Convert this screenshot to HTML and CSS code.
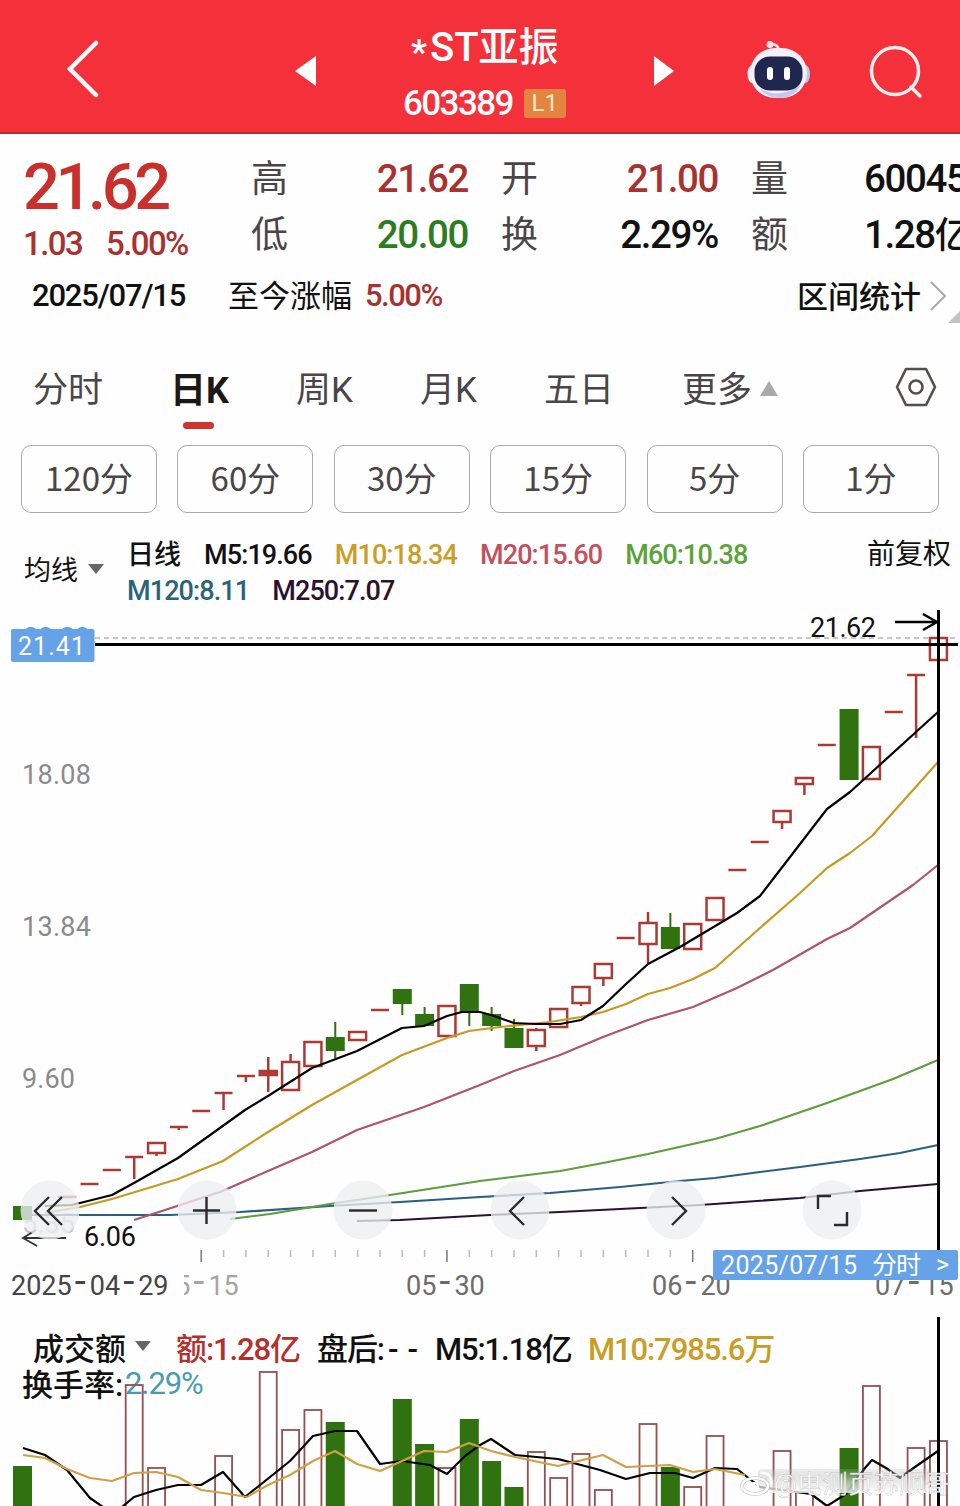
FILE: index.html
```html
<!DOCTYPE html>
<html lang="zh-CN">
<head>
<meta charset="UTF-8">
<meta name="viewport" content="width=device-width, initial-scale=1.0">
<title>*ST亚振 603389</title>
<link rel="stylesheet" href="styles.css">
</head>
<body>
<header class="topbar">
    <svg class="back" width="34" height="60" viewBox="0 0 34 60"><path d="M30 5 L4 31 L30 57"/></svg>
    <svg class="prev" width="22" height="32" viewBox="0 0 22 32"><path d="M21 1 V31 L0 16 Z"/></svg>
    <div class="stock">
        <div class="stock-name"><span class="star">*</span>ST亚振</div>
        <div class="stock-code"><span class="code">603389</span><span class="level">L1</span></div>
    </div>
    <svg class="next" width="22" height="32" viewBox="0 0 22 32"><path d="M1 1 V31 L21 16 Z"/></svg>
    <svg class="robot" width="64" height="60" viewBox="0 0 64 60">
        <path d="M32 11 C32 6 28 4 23 4" fill="none" stroke="#ffe6ea" stroke-width="2.5"/>
        <circle cx="23" cy="4.5" r="3.5" fill="#ffe0e4"/>
        <ellipse cx="5" cy="34" rx="4.5" ry="9" fill="#f4eef8"/>
        <ellipse cx="58.500" cy="34" rx="4.500" ry="9" fill="#b7c8f2"/>
        <rect x="3" y="8" width="57" height="50" rx="25" fill="#f5f1fb"/>
        <path d="M12 48 Q32 60 54 45 Q47 58 32 58 Q20 58 12 48Z" fill="#c9c7ee"/>
        <rect x="7.500" y="16.500" width="48" height="34" rx="15" fill="#1f274f"/>
        <rect x="20" y="27" width="6" height="13" rx="3" fill="#fff"/>
        <rect x="37" y="27" width="6" height="13" rx="3" fill="#fff"/>
    </svg>
    <svg class="search" width="56" height="56" viewBox="0 0 56 56"><circle cx="27" cy="26" r="23.500"/><path d="M43 42 L52 51"/></svg>
</header>

<section class="quote">
    <div class="last">
        <div class="price">21.62</div>
        <div class="change"><span>1.03</span><span>5.00%</span></div>
    </div>
    <dl class="stats">
        <dt>高</dt><dd class="up">21.62</dd>
        <dt>开</dt><dd class="up">21.00</dd>
        <dt>量</dt><dd class="cut">60045</dd>
        <dt>低</dt><dd class="down">20.00</dd>
        <dt>换</dt><dd>2.29%</dd>
        <dt>额</dt><dd class="cut">1.28<span class="unit">亿</span></dd>
    </dl>
</section>

<section class="range">
    <span class="range-date">2025/07/15</span>
    <span class="range-label">至今涨幅</span>
    <span class="range-value">5.00%</span>
    <span class="range-link">区间统计</span>
    <svg class="chevron" width="18" height="32" viewBox="0 0 18 32"><path d="M2 2 L16 16 L2 30"/></svg>
    <i class="corner"></i>
</section>

<nav class="tabs">
    <a>分时</a>
    <a class="active">日K</a>
    <a>周K</a>
    <a>月K</a>
    <a>五日</a>
    <a>更多<svg width="18" height="15" viewBox="0 0 18 15"><path d="M9 0 L18 15 H0 Z"/></svg></a>
    <svg class="settings" width="42" height="40" viewBox="0 0 42 40"><path d="M11 2 H31 L40 20 L31 38 H11 L2 20 Z"/><circle cx="21" cy="20" r="6.500"/></svg>
</nav>

<div class="minutes">
    <button>120分</button>
    <button>60分</button>
    <button>30分</button>
    <button>15分</button>
    <button>5分</button>
    <button>1分</button>
</div>

<section class="legend">
    <div class="picker">均线<i class="caret"></i></div>
    <div class="ma">
        <div class="ma-row"><b>日线</b><span>M5:19.66</span><span class="m10">M10:18.34</span><span class="m20">M20:15.60</span><span class="m60">M60:10.38</span></div>
        <div class="ma-row"><span class="m120">M120:8.11</span><span class="m250">M250:7.07</span></div>
    </div>
    <div class="adjust">前复权</div>
</section>

<svg class="chart" width="960" height="695" viewBox="0 605 960 695">
    <text class="axis-on" x="23" y="647" textLength="67">22.32</text>
    <path class="dash" d="M95 638 H955"/>
    <text class="axis" x="22" y="784" textLength="69">18.08</text>
    <text class="axis" x="22" y="936" textLength="69">13.84</text>
    <text class="axis" x="22" y="1088" textLength="53">9.60</text>
    <text class="axis faint" x="22" y="1233" textLength="53">5.35</text>
    <g id="ticks"></g>
    <text class="axis soft" x="160" y="1295">05<tspan class="hy" dx="3">-</tspan><tspan dx="4">15</tspan></text>
    <rect x="10" y="1270" width="174" height="30" fill="#fefefe"/>
    <text class="axis dark" x="11" y="1295">2025<tspan class="hy" dx="3">-</tspan><tspan dx="4">04</tspan><tspan class="hy" dx="3">-</tspan><tspan dx="4">29</tspan></text>
    <text class="axis mid" x="406" y="1295">05<tspan class="hy" dx="3">-</tspan><tspan dx="4">30</tspan></text>
    <text class="axis mid" x="652" y="1295">06<tspan class="hy" dx="3">-</tspan><tspan dx="4">20</tspan></text>
    <text class="axis mid" x="875" y="1295">07<tspan class="hy" dx="3">-</tspan><tspan dx="4">15</tspan></text>

    <g id="candles"></g>
    <g class="lines">
        <polyline stroke="#2a5f80" points="22,1215 170,1215 240,1212 330,1206 400,1202 480,1197 550,1193 620,1187 680,1181 715,1178 760,1172 800,1167 860,1159 900,1153 938,1145"/>
        <polyline stroke="#2b1130" points="357,1221 400,1220 490,1215 560,1212 640,1208 700,1205 800,1198 860,1191 938,1184"/>
        <polyline stroke="#5f9c3c" points="230,1219 270,1214 330,1204 390,1195 480,1181 560,1171 603,1163 648,1154 715,1139 760,1126 827,1103 893,1079 938,1060"/>
        <polyline stroke="#b05468" points="134,1220 165,1210 220,1192 268,1171 312,1152 357,1130 424,1107 480,1085 514,1071 560,1055 603,1037 648,1020 693,1007 737,988 773,970 827,939 850,928 913,885 938,865"/>
        <polyline stroke="#c69a22" points="45,1213 80,1207 112,1199 178,1179 223,1161 268,1132 312,1105 357,1080 402,1055 447,1038 469,1031 500,1027 550,1022 581,1017 603,1012 626,1004 648,994 670,988 693,979 715,968 760,928 800,893 827,868 850,853 872,836 938,762"/>
        <polyline stroke="#000" points="45,1206 72,1205 112,1195 134,1183 178,1158 245,1110 268,1096 312,1068 357,1051 402,1028 424,1026 447,1016 462,1012 480,1012 491,1015 514,1023 536,1024 560,1024 581,1020 603,1006 626,984 648,964 680,947 737,913 760,896 827,809 850,792 938,712"/>
    </g>

    <text class="mark" x="810" y="637" textLength="66">21.62</text>
    <path class="arrow" d="M895 622 H936 M923 614 L937 622 L923 630"/>
    <text class="mark" x="84" y="1246" textLength="52">6.06</text>
    <path class="arrow thin" d="M66 1238 H24 M36 1230 L23 1238 L37 1246"/>

    <path class="cross" d="M95 644.500 H958 M938.500 610 V1250"/>
    <rect class="tag" x="11" y="629" width="83.500" height="33" rx="2"/>
    <text class="tag-text" x="18" y="655" textLength="67">21.41</text>
    <rect class="tag" x="713" y="1250" width="245" height="30" rx="2"/>
    <text class="tag-text" x="721" y="1274" textLength="136">2025/07/15</text>
    <text class="tag-text" x="872" y="1274" textLength="49">分时</text>
    <text class="tag-text" x="936" y="1273">&gt;</text>

    <g class="knobs">
        <circle cx="50" cy="1210" r="29.500"/>
        <circle cx="207" cy="1210" r="29.500"/>
        <circle cx="363" cy="1210" r="29.500"/>
        <circle cx="520" cy="1210" r="29.500"/>
        <circle cx="676" cy="1210" r="29.500"/>
        <circle cx="832" cy="1210" r="29.500"/>
        <path d="M49 1197 L35 1211 L49 1225 M62 1197 L48 1211 L62 1225"/>
        <path d="M193 1210.500 H220 M206.500 1197 V1224"/>
        <path d="M349 1210.500 H377"/>
        <path d="M524 1197 L510 1211 L524 1225"/>
        <path d="M672 1197 L686 1211 L672 1225"/>
        <path d="M818 1209 V1196 H831 M834 1225 H847 V1212"/>
    </g>
</svg>

<section class="volume">
    <div class="volume-head">
        <div class="vol-row"><b class="vol-name">成交额</b><i class="caret"></i><span class="vol-amount">额:1.28亿</span><span class="vol-after">盘后:<span class="none">--</span></span><span class="vol-m5">M5:1.18亿</span><span class="m10">M10:7985.6万</span></div>
        <div class="vol-row second"><span>换手率:</span><span class="rate">2.29%</span></div>
    </div>
    <svg class="volume-chart" width="960" height="206" viewBox="0 1300 960 206">
        <g id="bars"></g>
        <g class="lines">
            <polyline stroke="#000" points="23,1448 45,1455 67,1470 90,1498 103,1507 122,1507 134,1497 156,1490 178,1485 201,1485 223,1472 245,1497 290,1461 313,1436 335,1431 357,1431 380,1464 402,1461 430,1465 447,1474 465,1456 480,1445 491,1439 515,1455 558,1459 600,1470 626,1479 650,1473 675,1473 693,1478 715,1468 737,1469 760,1487 811,1494 827,1506 846,1494 865,1468 872,1460 886,1468 900,1478 915,1467 938,1451"/>
            <polyline stroke="#cfa045" points="23,1455 45,1458 67,1469 90,1478 112,1481 134,1473 156,1472 178,1477 201,1490 223,1493 247,1497 268,1485 290,1475 313,1461 335,1451 357,1464 380,1471 402,1461 424,1451 447,1452 469,1443 491,1451 515,1457 558,1466 603,1455 626,1467 670,1465 693,1472 715,1469 745,1475"/>
        </g>
        <path class="cross" d="M938.500 1317 V1506"/>
        <defs>
            <linearGradient id="fade" x1="0" y1="0" x2="0" y2="1">
                <stop offset="0" stop-color="#aaa" stop-opacity=".2"/>
                <stop offset=".5" stop-color="#ddd" stop-opacity=".65"/>
                <stop offset="1" stop-color="#fff" stop-opacity=".8"/>
            </linearGradient>
        </defs>
        <rect x="758" y="1469" width="172" height="24" rx="4" fill="url(#fade)"/>
        <g class="sign">
            <ellipse class="edge" cx="755" cy="1486" rx="13" ry="8"/>
            <ellipse cx="755" cy="1486" rx="13" ry="8"/>
            <circle cx="754" cy="1487" r="4"/>
            <path d="M760 1473 Q773 1472 771 1485"/>
        </g>
        <text class="sign-text" x="774" y="1493" textLength="176">@电测页苏顺哥</text>
    </svg>
</section>
<script src="chart.js"></script>
</body>
</html>
```

FILE: styles.css
```css
* {
    box-sizing: border-box;
}

body {
    margin: 0;
    width: 960px;
    height: 1506px;
    overflow: hidden;
    background-color: #fefefe;
    color: #111;
    font-family: Roboto, "Noto Sans CJK SC", sans-serif;
}

/* top bar */
.topbar {
    display: grid;
    grid-template-columns: 66px 229px 108px 250px 94px 121px 92px;
    height: 134px;
    background-color: #f4303b;
    border-bottom: 2px solid #b52c33;
    color: #fff;
}

.back {
    grid-column: 2;
    margin-top: 38px;
    fill: none;
    stroke: #fff;
    stroke-width: 4.5;
    stroke-linecap: round;
}

.prev, .next {
    margin-top: 55px;
    fill: #fff;
}

.stock {
    width: 170px;
    padding-top: 20px;
}

.stock-name {
    height: 56px;
    padding-left: 8px;
    font-size: 40px;
    font-weight: 500;
    line-height: 56px;
    white-space: nowrap;
}

.star {
    position: relative;
    top: 3px;
    font-size: 35px;
    font-weight: 700;
    margin-right: 3px;
}

.stock-code {
    display: flex;
    align-items: center;
    height: 54px;
    font-size: 35px;
    font-weight: 500;
    letter-spacing: -1.6px;
}

.level {
    width: 42px;
    height: 29px;
    margin-left: 11px;
    background-color: #e58440;
    border-radius: 3px;
    color: #ffe9c8;
    font-size: 24px;
    font-weight: 400;
    line-height: 29px;
    letter-spacing: 0;
    text-align: center;
}

.robot {
    margin-top: 40px;
}

.search {
    margin-top: 45px;
    fill: none;
    stroke: #fff0f0;
    stroke-width: 3.5;
    stroke-linecap: round;
}

/* quote */
.quote {
    display: grid;
    grid-template-columns: 228px 732px;
    height: 132px;
    padding: 15px 0 0 23px;
    overflow: hidden;
}

.last {
    color: #c9302c;
}

.price {
    height: 76px;
    font-size: 65px;
    font-weight: 500;
    line-height: 77px;
    letter-spacing: -4.4px;
}

.change {
    display: flex;
    gap: 24px;
    height: 38px;
    color: #a8322f;
    font-size: 33px;
    font-weight: 500;
    line-height: 38px;
    letter-spacing: -1.6px;
}

.stats {
    display: grid;
    grid-template-columns: 60px 157px 93px 157px 92px 150px;
    grid-template-rows: 56px 56px;
    align-items: center;
    margin: 0;
    font-size: 38.5px;
    white-space: nowrap;
}

.stats dt {
    padding-bottom: 3px;
    color: #4a4547;
    font-size: 37px;
}

.stats dt:nth-of-type(3n+2), .stats dt:nth-of-type(3n) {
    padding-left: 33px;
}

.stats dd {
    margin: 0;
    padding-top: 3px;
    font-weight: 500;
    line-height: 46px;
    letter-spacing: -1.4px;
    text-align: right;
}

.stats .cut {
    padding-left: 54px;
    text-align: left;
}

.unit {
    font-size: 36px;
    line-height: 1;
}

.up {
    color: #a8322f;
}

.down {
    color: #2c7d22;
}

/* range row */
.range {
    position: relative;
    display: flex;
    align-items: center;
    height: 62px;
    padding: 0 0 3px 32px;
    font-size: 31px;
}

.range-date {
    width: 196px;
    padding-bottom: 1px;
    font-weight: 500;
    letter-spacing: -1.2px;
}

.range-label {
    width: 137px;
    padding-bottom: 4px;
}

.range-value {
    width: 432px;
    padding-bottom: 1px;
    color: #a8322f;
    font-weight: 500;
    letter-spacing: -1.5px;
}

.range-link {
    width: 132px;
    padding-bottom: 2px;
    font-weight: 500;
}

.chevron {
    fill: none;
    stroke: #aaa;
    stroke-width: 2;
}

.corner {
    position: absolute;
    right: 0;
    bottom: 5px;
    border-left: 12px solid transparent;
    border-bottom: 12px solid #c9c2ba;
}

/* tabs */
.tabs {
    display: grid;
    grid-template-columns: 137px 126px 124px 124px 138px 213px 42px;
    align-items: center;
    height: 117px;
    padding: 0 0 0 33px;
    color: #4a4547;
    font-size: 35px;
}

.tabs .active {
    position: relative;
    color: #1c1818;
    font-size: 36px;
    font-weight: 700;
}

.active::after {
    content: "";
    position: absolute;
    left: 13px;
    bottom: -16px;
    width: 31px;
    height: 7px;
    border-radius: 4px;
    background-color: #cc3530;
}

.tabs a svg {
    margin-left: 8px;
    vertical-align: 6px;
    fill: #aaa;
}

.settings {
    fill: none;
    stroke: #555047;
    stroke-width: 2.6;
    stroke-linejoin: round;
}

/* minute buttons */
.minutes {
    display: grid;
    grid-template-columns: repeat(6, 136px);
    justify-content: space-between;
    padding: 0 21px;
}

.minutes button {
    height: 68px;
    padding: 0 0 4px;
    background: none;
    border: 1px solid #a9a9a9;
    border-radius: 10px;
    color: #4a4547;
    font-family: "Noto Sans CJK SC", sans-serif;
    font-size: 33px;
}

/* moving average legend */
.legend {
    display: flex;
    height: 92px;
    padding: 22px 0 0 24px;
    font-size: 27px;
    white-space: nowrap;
}

.picker {
    display: flex;
    align-items: center;
    gap: 10px;
    width: 103px;
    height: 67px;
}

.caret {
    border: 8px solid transparent;
    border-top: 10px solid #666;
    border-bottom: 0;
}

.ma {
    width: 740px;
}

.ma-row {
    display: flex;
    gap: 23px;
    height: 36px;
    font-weight: 500;
    line-height: 40px;
    letter-spacing: -.9px;
}

.ma-row b {
    font-weight: 500;
    letter-spacing: 0;
}

.m10 { color: #cb9d26; }
.m20 { color: #c4505c; }
.m60 { color: #5aa33a; }
.m120 { color: #2a6478; }
.m250 { color: #2b1130; }

.adjust {
    font-size: 28px;
    line-height: 40px;
}

/* charts */
.chart, .volume-chart {
    display: block;
}

.axis, .axis-on, .mark, .tag-text {
    font-size: 27px;
}

.axis { fill: #8a8a8a; }
.axis-on { fill: #5f9fe6; font-weight: 700; }
.hy { font-size: 40px; }
.dark { fill: #444; }
.mid { fill: #6c6c6c; }
.soft { fill: #a5a5a5; }
.faint { fill: #c4c4c4; }
.mark { fill: #111; }
.tag { fill: #65a2e8; }
.tag-text { fill: #fff; font-size: 25px; }

.dash {
    stroke: #b5b5b5;
    stroke-width: 1.5;
    stroke-dasharray: 5 4;
}

.cross {
    fill: none;
    stroke: #000;
    stroke-width: 3;
}

.arrow {
    fill: none;
    stroke: #000;
    stroke-width: 2.4;
}

.thin {
    stroke: #333;
    stroke-width: 1.8;
}

.lines polyline {
    fill: none;
    stroke-width: 2.2;
    stroke-linejoin: round;
}

.knobs circle {
    fill: #eceef1;
    opacity: .78;
}

.knobs path {
    fill: none;
    stroke: #2d2a2c;
    stroke-width: 2.4;
}

.rise {
    fill: none;
    stroke: #a93b35;
    stroke-width: 2.5;
}

.solid {
    fill: #d8302a;
}

.fall {
    fill: #2f720f;
    stroke: #2f720f;
    stroke-width: 2;
}

.bar.rise {
    stroke: #925052;
    stroke-width: 1.8;
}

/* volume */
.volume {
    display: grid;
}

.volume-head, .volume-chart {
    grid-area: 1 / 1;
}

.vol-row {
    display: flex;
    align-items: center;
    height: 36px;
    margin-top: 28px;
    padding-left: 33px;
    font-size: 31px;
    font-weight: 500;
    letter-spacing: -1.1px;
    white-space: nowrap;
}

.second {
    margin-top: 0;
    padding-left: 22px;
}

.vol-name {
    width: 102px;
    font-weight: 500;
    letter-spacing: 0;
}

.vol-amount {
    width: 141px;
    margin-left: 25px;
    color: #b52f2c;
}

.vol-after {
    width: 118px;
}

.none {
    letter-spacing: 9px;
    margin-left: 4px;
}

.vol-m5 {
    width: 153px;
}

.second span:first-child {
    width: 103px;
    letter-spacing: 0;
}

.rate {
    padding-top: 2px;
    color: #4a9ab2;
    font-weight: 400;
}

.sign {
    fill: none;
    stroke: #fff;
    stroke-width: 2.5;
}

.sign .edge {
    stroke: #bbb;
    stroke-width: 3.6;
}

.sign-text {
    fill: #fff;
    stroke: #aaa;
    stroke-width: .3;
    font-size: 25px;
}
```

FILE: chart.js
```js
const X0 = 22.5;
const STEP = 22.34;

// [index, type, body top, body bottom, high, low]
const candles = [
    [0, 'fall', 1207, 1219], [2, 'dash', 1197], [3, 'dash', 1184], [4, 'dash', 1170],
    [5, 'dash', 1157, 1157, 1157, 1179], [6, 'rise', 1143, 1153, 1143, 1156],
    [7, 'dash', 1127, 1127, 1127, 1130], [8, 'dash', 1111],
    [9, 'dash', 1093, 1093, 1093, 1110], [10, 'dash', 1076, 1076, 1076, 1082],
    [11, 'solid', 1071, 1075, 1057, 1092], [12, 'rise', 1062, 1090, 1054, 1090],
    [13, 'rise', 1042, 1066], [14, 'fall', 1038, 1050, 1022, 1058],
    [15, 'rise', 1032, 1040], [16, 'dash', 1010],
    [17, 'fall', 990, 1003, 990, 1015], [18, 'fall', 1015, 1025, 1007, 1025],
    [19, 'rise', 1006, 1036], [20, 'fall', 985, 1011, 985, 1026],
    [21, 'fall', 1015, 1025, 1007, 1031], [22, 'fall', 1029, 1047, 1019, 1047],
    [23, 'rise', 1030, 1046, 1028, 1051], [24, 'rise', 1009, 1027],
    [25, 'rise', 987, 1003, 987, 1006], [26, 'rise', 964, 978, 964, 986],
    [27, 'dash', 938], [28, 'rise', 923, 944, 912, 963],
    [29, 'fall', 928, 948, 913, 948], [30, 'rise', 924, 949],
    [31, 'rise', 898, 920], [32, 'dash', 870], [33, 'dash', 842],
    [34, 'rise', 811, 822, 811, 829], [35, 'rise', 778, 784, 778, 795],
    [36, 'dash', 745], [37, 'fall', 710, 779], [38, 'rise', 747, 779],
    [39, 'dash', 712], [40, 'dash', 675, 675, 675, 738], [41, 'rise', 638, 660]
];

// [index, type, top]
const bars = [
    [0, 'fall', 1467], [5, 'rise', 1385], [6, 'rise', 1468], [9, 'rise', 1456],
    [11, 'rise', 1372], [12, 'rise', 1430], [13, 'rise', 1410], [14, 'fall', 1423],
    [17, 'fall', 1400], [18, 'fall', 1445], [19, 'rise', 1468], [20, 'fall', 1420],
    [21, 'fall', 1462], [22, 'fall', 1488], [23, 'rise', 1452], [24, 'rise', 1478],
    [25, 'rise', 1454], [26, 'rise', 1490], [28, 'rise', 1424], [29, 'fall', 1468],
    [30, 'rise', 1487], [31, 'rise', 1436], [34, 'rise', 1451], [35, 'rise', 1492],
    [37, 'fall', 1449], [38, 'rise', 1386], [40, 'rise', 1448], [41, 'rise', 1441]
];

const xOf = i => X0 + i * STEP;

document.getElementById('candles').innerHTML = candles.map(([i, type, top, bottom, high, low]) => {
    const x = xOf(i);
    if (type === 'dash') {
        const tail = low ? ` M${x} ${top} V${low}` : '';
        return `<path class="rise" d="M${x - 9} ${top} H${x + 9}${tail}"/>`;
    }
    const cls = type === 'solid' ? 'rise solid' : type;
    const wick = high ? `<path class="${cls}" d="M${x} ${high} V${top} M${x} ${bottom} V${low}"/>` : '';
    return `${wick}<rect class="${cls}" x="${x - 8.5}" y="${top}" width="17" height="${bottom - top}"/>`;
}).join('');

document.getElementById('bars').innerHTML = bars.map(([i, type, top]) =>
    `<rect class="bar ${type}" x="${xOf(i) - 8.5}" y="${top}" width="17" height="${1520 - top}"/>`
).join('');

let ticks = '';
for (let i = 8; i < 32; i++) {
    const major = i % 11 === 8;
    ticks += `<path d="M${xOf(i)} 1250 V${major ? 1262 : 1257}" stroke="${major ? '#777' : '#bbb'}" stroke-width="1.5"/>`;
}
document.getElementById('ticks').innerHTML = ticks;
```
